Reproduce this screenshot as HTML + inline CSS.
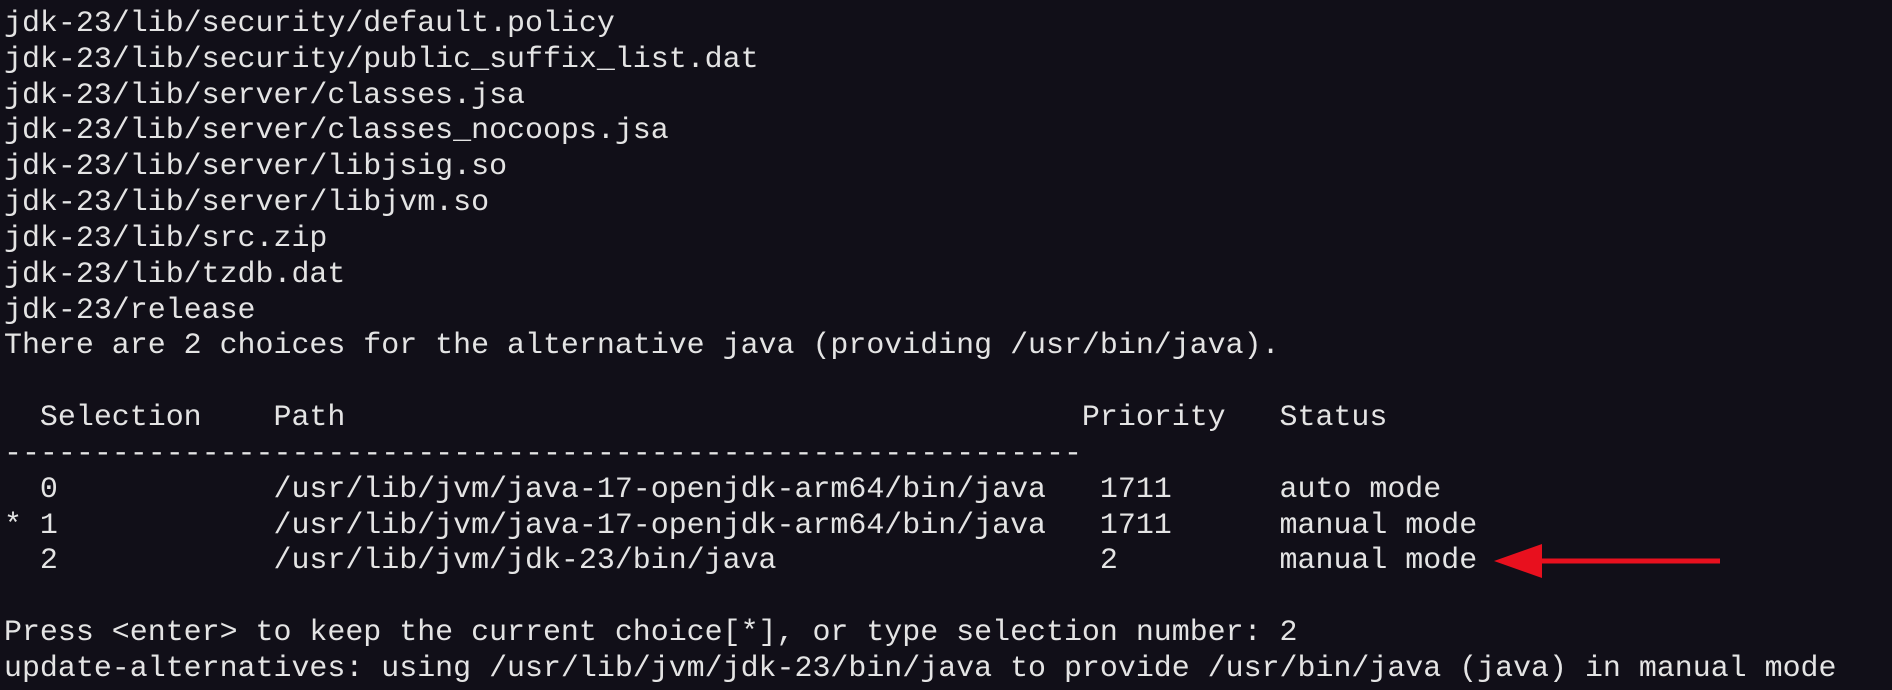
<!DOCTYPE html>
<html><head><style>
html,body{margin:0;padding:0;background:#110f18;width:1892px;height:690px;overflow:hidden}
pre{margin:0;position:absolute;left:4px;top:6px;font-family:"Liberation Mono",monospace;font-size:29.95px;line-height:35.83px;color:#e4e4e4}
</style></head><body>
<pre>jdk-23/lib/security/default.policy
jdk-23/lib/security/public_suffix_list.dat
jdk-23/lib/server/classes.jsa
jdk-23/lib/server/classes_nocoops.jsa
jdk-23/lib/server/libjsig.so
jdk-23/lib/server/libjvm.so
jdk-23/lib/src.zip
jdk-23/lib/tzdb.dat
jdk-23/release
There are 2 choices for the alternative java (providing /usr/bin/java).

  Selection    Path                                         Priority   Status
------------------------------------------------------------
  0            /usr/lib/jvm/java-17-openjdk-arm64/bin/java   1711      auto mode
* 1            /usr/lib/jvm/java-17-openjdk-arm64/bin/java   1711      manual mode
  2            /usr/lib/jvm/jdk-23/bin/java                  2         manual mode

Press &lt;enter&gt; to keep the current choice[*], or type selection number: 2
update-alternatives: using /usr/lib/jvm/jdk-23/bin/java to provide /usr/bin/java (java) in manual mode</pre>
<svg style="position:absolute;left:0;top:0" width="1892" height="690">
<line x1="1530" y1="561" x2="1720" y2="561" stroke="#e8101e" stroke-width="5"/>
<polygon points="1494,561 1542,544 1542,578" fill="#e8101e"/>
</svg>
</body></html>
